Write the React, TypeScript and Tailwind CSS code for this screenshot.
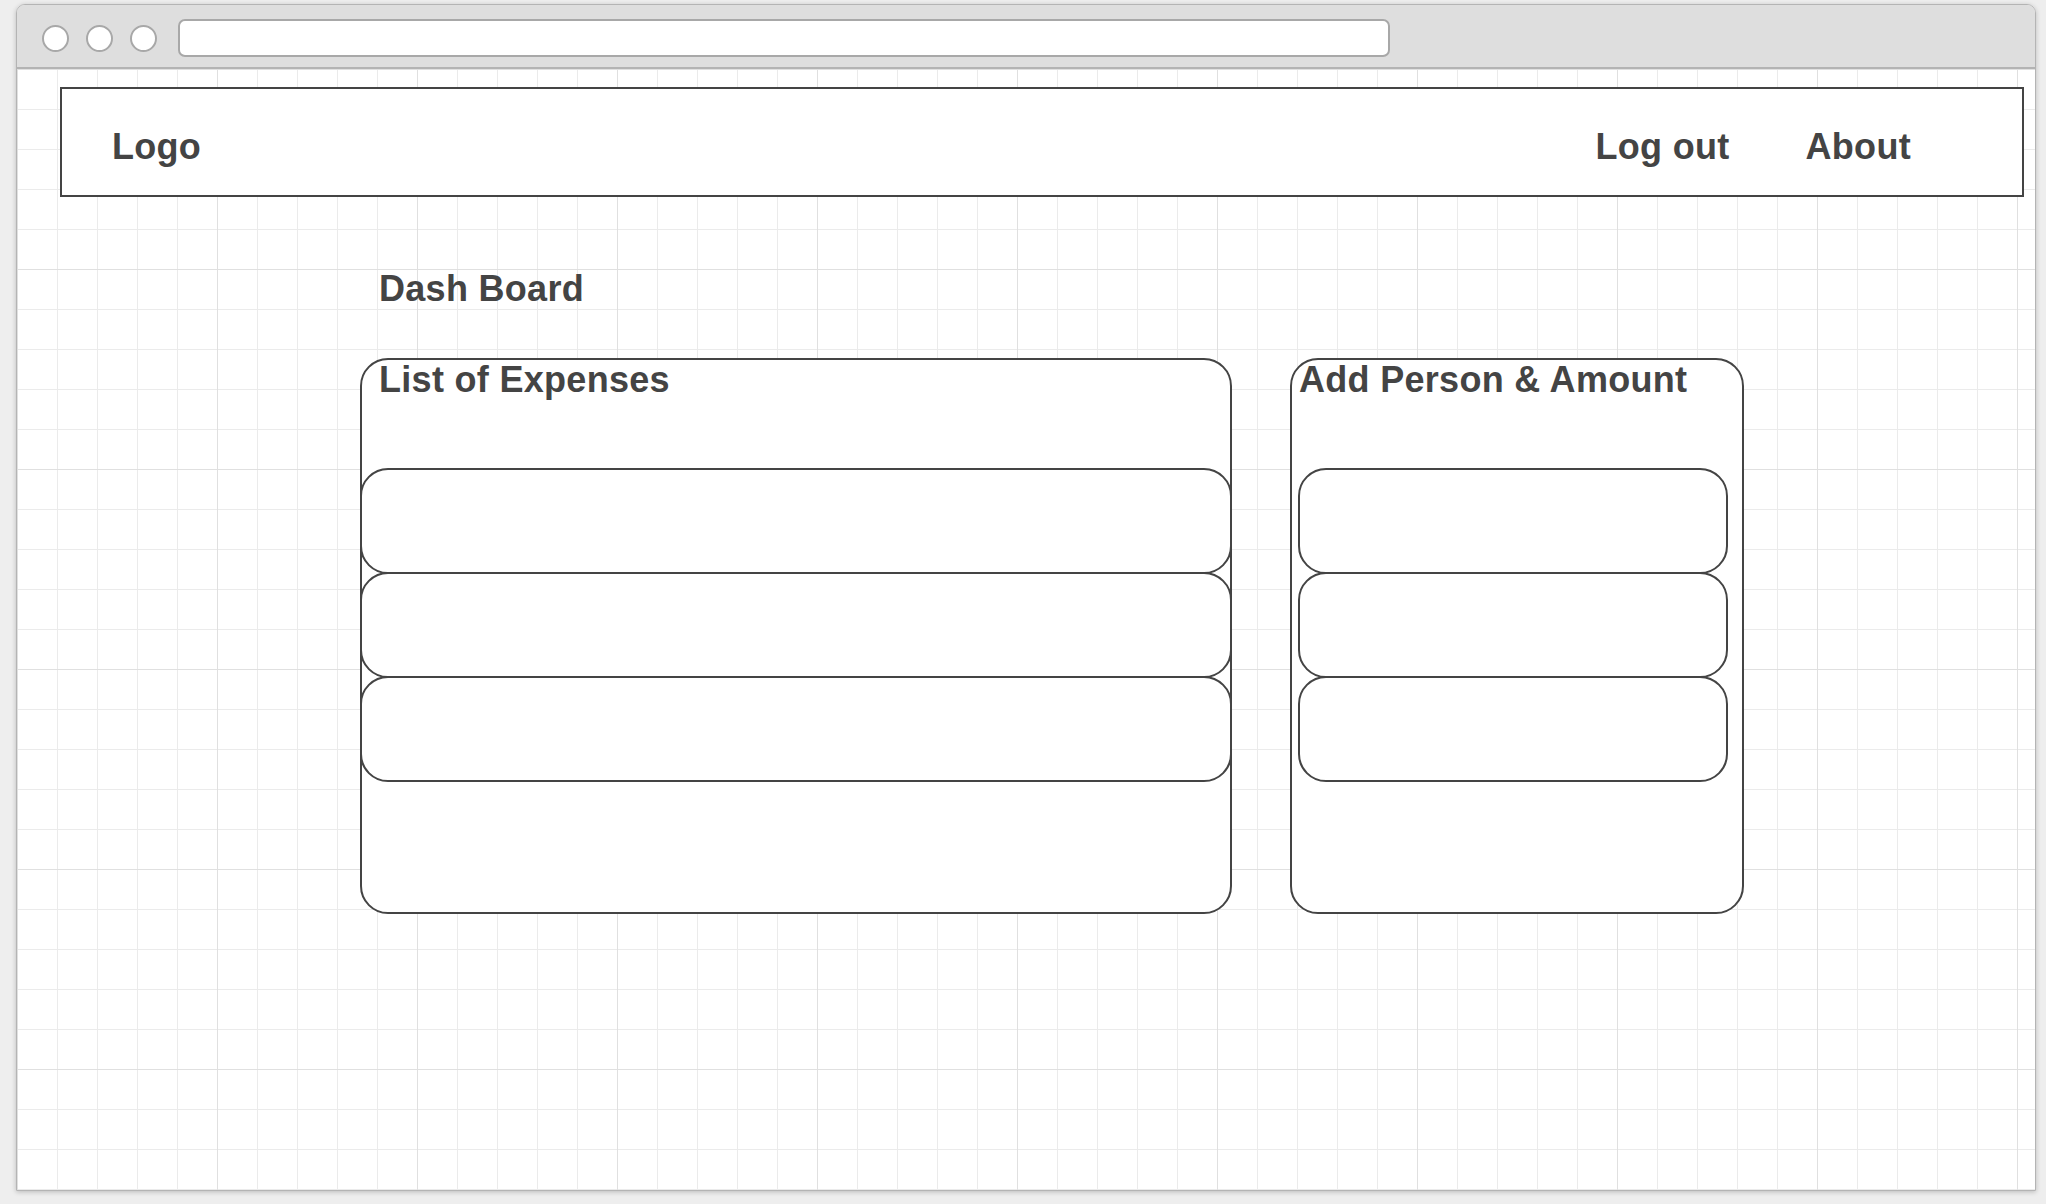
import React from 'react';

// wireframe: browser window holding the dashboard mock
const textCls = "font-['Liberation_Sans',Arial,sans-serif] font-bold text-[36px] leading-[36px] tracking-[0.3px] text-[#444]";

const Row = ({ className }: { className: string }) => (
  <div className={`h-[106px] border-2 border-[#444] rounded-[28px] bg-white ${className}`} />
);

const App = () => {
  return (
    <div className="w-full h-[1204px] bg-[#eeeeee] pt-[4px] pl-[16px] pr-[10px] pb-[13px]">
      <div className="flex flex-col h-full border border-[#b4b4b4] rounded-t-[9px] overflow-hidden shadow-[0_1px_5px_rgba(0,0,0,0.22)]">
        {/* title bar */}
        <div className="h-[64px] shrink-0 flex items-center pt-[4px] pl-[25px] bg-[#dedede] border-b-2 border-[#b3b3b3]">
          <div className="w-[27px] h-[27px] rounded-full bg-white border-2 border-[#a8a8a8]" />
          <div className="w-[27px] h-[27px] rounded-full bg-white border-2 border-[#a8a8a8] ml-[17px]" />
          <div className="w-[27px] h-[27px] rounded-full bg-white border-2 border-[#a8a8a8] ml-[17px]" />
          <div className="w-[1212px] h-[38px] ml-[21px] rounded-[7px] bg-white border-2 border-[#a8a8a8]" />
        </div>

        {/* page area with grid paper */}
        <div className="flex-1 bg-white bg-[image:linear-gradient(to_right,#e0e0e0_1px,transparent_1px),linear-gradient(to_bottom,#e0e0e0_1px,transparent_1px),linear-gradient(to_right,#ebebeb_1px,transparent_1px),linear-gradient(to_bottom,#ebebeb_1px,transparent_1px)] bg-size-[200px_200px,200px_200px,40px_40px,40px_40px] bg-[length:200px_200px,200px_200px,40px_40px,40px_40px]">
          <header className="mt-[18px] ml-[43px] mr-[11px] h-[110px] flex items-center pt-[10px] pl-[50px] pr-[111px] bg-white border-2 border-[#444]">
            <span className={textCls}>Logo</span>
            <span className={`${textCls} ml-auto`}>Log out</span>
            <span className={`${textCls} ml-[76px]`}>About</span>
          </header>

          <main className="pl-[343px]">
            <h1 className={`${textCls} mt-[74px] pl-[19px]`}>Dash Board</h1>

            <div className="flex mt-[51px] gap-[58px]">
              <section className="w-[872px] h-[556px] border-2 border-[#444] rounded-[28px] bg-white">
                <h2 className={`${textCls} pt-[2px] pl-[17px]`}>List of Expenses</h2>
                <div className="mt-[70px]">
                  <Row className="-mx-[2px]" />
                  <Row className="-mx-[2px] -mt-[2px]" />
                  <Row className="-mx-[2px] -mt-[2px]" />
                </div>
              </section>

              <section className="w-[454px] h-[556px] border-2 border-[#444] rounded-[28px] bg-white">
                <h2 className={`${textCls} pt-[2px] pl-[7px]`}>Add Person &amp; Amount</h2>
                <div className="mt-[70px] ml-[6px] mr-[14px]">
                  <Row className="" />
                  <Row className="-mt-[2px]" />
                  <Row className="-mt-[2px]" />
                </div>
              </section>
            </div>
          </main>
        </div>
      </div>
    </div>
  );
};

export default App;
